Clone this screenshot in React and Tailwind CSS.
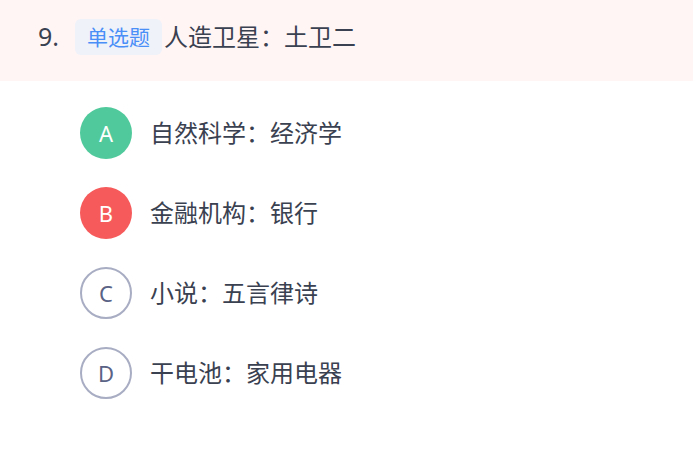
export default function App() {
  const font = { fontFamily: '"Noto Sans", "Noto Sans CJK SC", sans-serif' };
  const options = [
    { k: "A", t: "自然科学：经济学", c: "bg-[#50ca9c] text-white" },
    { k: "B", t: "金融机构：银行", c: "bg-[#f65a5a] text-white" },
    { k: "C", t: "小说：五言律诗", c: "border-2 border-[#a9adc3] text-[#5a6385]" },
    { k: "D", t: "干电池：家用电器", c: "border-2 border-[#a9adc3] text-[#5a6385]" },
  ];
  return (
    <div className="w-[693px] h-[465px] bg-white" style={font}>
      <div className="h-[81px] bg-[#fff5f5] flex items-start pt-[19px] pl-[38px]">
        <div className="h-[36px] flex items-center text-[25px] text-[#3a4150] w-[37px]">9.</div>
        <div className="h-[36px] w-[87px] justify-center flex items-center rounded-[6px] bg-[#eff2f9] text-[#4a8ef8] text-[21px] leading-none">单选题</div>
        <div className="h-[36px] flex items-center text-[24px] text-[#3a4150] ml-[2px] leading-none">人造卫星：土卫二</div>
      </div>
      <div className="flex flex-col gap-[28px] pt-[26px] pl-[80px]">
        {options.map((o) => (
          <div key={o.k} className="flex items-center h-[52px]">
            <div className={"w-[52px] h-[52px] rounded-full flex items-center justify-center text-[22px] " + o.c}>{o.k}</div>
            <div className="ml-[18px] text-[24px] text-[#3a4150] leading-none">{o.t}</div>
          </div>
        ))}
      </div>
    </div>
  );
}
